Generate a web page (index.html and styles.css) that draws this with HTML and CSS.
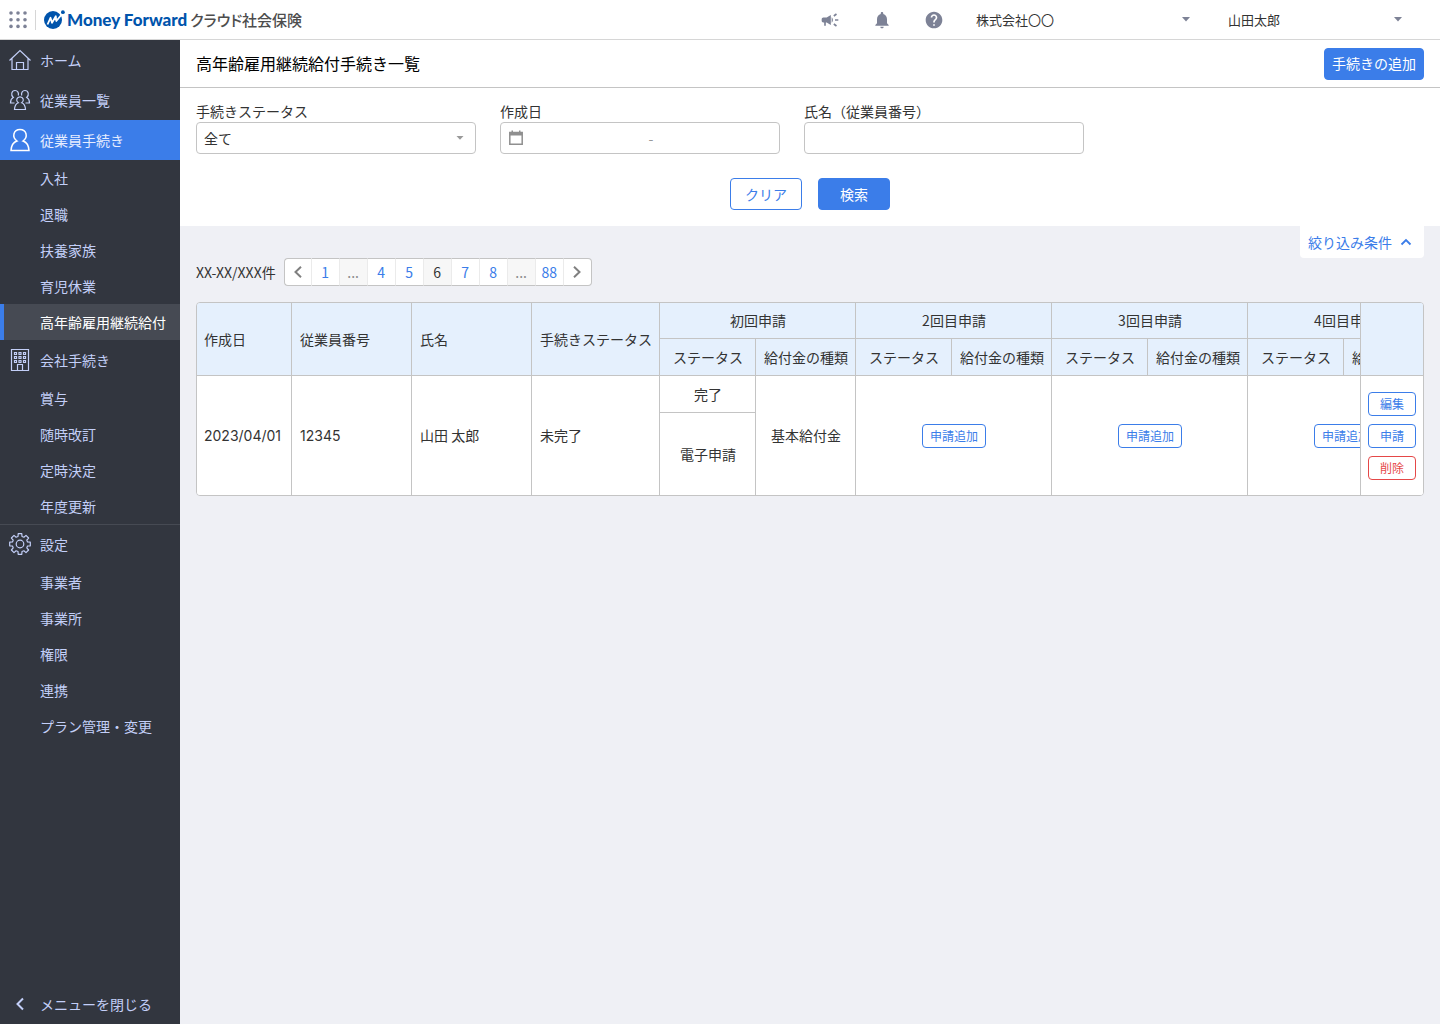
FILE: index.html
```html
<!DOCTYPE html>
<html lang="ja">
<head>
<meta charset="utf-8">
<meta name="viewport" content="width=device-width, initial-scale=1">
<title>高年齢雇用継続給付手続き一覧</title>
<link rel="stylesheet" href="styles.css">
</head>
<body>
<header class="topbar">
  <button class="icon-btn apps" type="button" aria-label="アプリ一覧">
    <svg width="18" height="18" viewBox="0 0 18 18" fill="#7d8296"><circle cx="2" cy="2" r="1.8"/><circle cx="9" cy="2" r="1.8"/><circle cx="16" cy="2" r="1.8"/><circle cx="2" cy="8.7" r="1.8"/><circle cx="9" cy="8.7" r="1.8"/><circle cx="16" cy="8.7" r="1.8"/><circle cx="2" cy="15.4" r="1.8"/><circle cx="9" cy="15.4" r="1.8"/><circle cx="16" cy="15.4" r="1.8"/></svg>
  </button>
  <a class="logo" href="#">
    <svg width="22" height="20" viewBox="0 0 22 20"><circle cx="9" cy="10" r="9" fill="#0054ac"/><path d="M3.500 14.500 6.500 7.800 8 12.800 11.800 6.300 12.300 11 18.500 3.500" fill="none" stroke="#fff" stroke-width="1.800" stroke-linejoin="round"/><circle cx="18.500" cy="2.500" r="3" fill="#fff"/><circle cx="18.900" cy="2.200" r="1.900" fill="#0054ac"/></svg>
    <span class="logo-brand">Money Forward</span>
    <span class="logo-product">クラウド社会保険</span>
  </a>
  <div class="topbar-icons">
    <button class="icon-btn" type="button" aria-label="お知らせ">
      <svg width="20" height="20" viewBox="0 0 24 24" fill="#7d8296"><path d="M18 11v2h4v-2h-4zm-2 6.61c.96.71 2.21 1.65 3.2 2.39.4-.53.8-1.07 1.2-1.6-.99-.74-2.24-1.68-3.2-2.4-.4.54-.8 1.08-1.2 1.61zM20.400 5.600c-.4-.53-.8-1.070-1.200-1.600-.99.740-2.240 1.680-3.200 2.400.4.530.8 1.070 1.200 1.600.96-.72 2.210-1.650 3.200-2.400zM4 9c-1.100 0-2 .9-2 2v2c0 1.100.9 2 2 2h1v4h2v-4h1l5 3V6L8 9H4zm11.500 3c0-1.330-.58-2.530-1.500-3.350v6.690c.92-.81 1.500-2.010 1.500-3.340z"/></svg>
    </button>
    <button class="icon-btn" type="button" aria-label="通知">
      <svg width="20" height="20" viewBox="0 0 24 24" fill="#7d8296"><path d="M12 22c1.100 0 2-.9 2-2h-4c0 1.100.89 2 2 2zm6-6v-5c0-3.070-1.640-5.640-4.500-6.320V4c0-.83-.67-1.500-1.500-1.500s-1.500.67-1.500 1.500v.68C7.630 5.360 6 7.920 6 11v5l-2 2v1h16v-1l-2-2z"/></svg>
    </button>
    <button class="icon-btn" type="button" aria-label="ヘルプ">
      <svg width="20" height="20" viewBox="0 0 24 24" fill="#7d8296"><path d="M12 2C6.480 2 2 6.480 2 12s4.480 10 10 10 10-4.480 10-10S17.520 2 12 2zm1 17h-2v-2h2v2zm2.070-7.750-.9.920C13.450 12.900 13 13.500 13 15h-2v-.5c0-1.100.45-2.100 1.170-2.830l1.240-1.260c.37-.36.59-.86.59-1.410 0-1.100-.9-2-2-2s-2 .9-2 2H8c0-2.210 1.790-4 4-4s4 1.790 4 4c0 .88-.36 1.680-.93 2.250z"/></svg>
    </button>
  </div>
  <div class="dropdown company">
    <select class="plain-select" aria-label="事業者"><option>株式会社〇〇</option></select>
    <svg class="caret" width="8" height="5" viewBox="0 0 8 5"><path d="M0 0h8L4 4.500z" fill="#7d8296"/></svg>
  </div>
  <div class="dropdown user">
    <select class="plain-select" aria-label="ユーザー"><option>山田太郎</option></select>
    <svg class="caret" width="8" height="5" viewBox="0 0 8 5"><path d="M0 0h8L4 4.500z" fill="#7d8296"/></svg>
  </div>
</header>
<div class="layout">
  <nav class="sidebar" aria-label="メインメニュー">
    <a class="nav-main" href="#"><svg width="24" height="24" viewBox="0 0 24 24"><path d="M1.500 12.500 12 2.500l10.500 10M4 10.500v11h16v-11M8.500 21.500v-7h7v7"/></svg>ホーム</a>
    <a class="nav-main" href="#"><svg width="24" height="24" viewBox="0 0 24 24"><path d="M6.500 15H2.500c0-3 .8-4.500 2.800-5.500C2.500 7 3.500 2.500 7 2.500c2.600 0 4.200 2.500 3.200 5M17.500 15h4c0-3-.8-4.500-2.800-5.500C21.500 7 20.500 2.500 17 2.500c-2.600 0-4.200 2.500-3.200 5M10.300 14.800c-3-2.300-1.500-6 1.700-6s4.700 3.700 1.700 6c2.500 1 3.600 3 3.800 6.700h-11c.2-3.700 1.300-5.700 3.800-6.700z"/></svg>従業員一覧</a>
    <a class="nav-main is-open" href="#"><svg width="24" height="24" viewBox="0 0 24 24"><path d="M9 13C3.500 9 5.500 1.500 12 1.500S20.500 9 15 13c4 1.300 5.700 4.500 6 9.500H3c.3-5 2-8.200 6-9.500z"/></svg>従業員手続き</a>
    <ul class="nav-sub">
      <li><a href="#">入社</a></li>
      <li><a href="#">退職</a></li>
      <li><a href="#">扶養家族</a></li>
      <li><a href="#">育児休業</a></li>
      <li><a class="is-current" href="#" aria-current="page">高年齢雇用継続給付</a></li>
    </ul>
    <a class="nav-main" href="#"><svg width="24" height="24" viewBox="0 0 24 24"><path d="M3.500 1.500h17v21h-17zM9.500 22.500v-6h5v6M6.500 4.500h2v2h-2zM11 4.500h2v2h-2zM15.500 4.500h2v2h-2zM6.500 8.500h2v2h-2zM11 8.500h2v2h-2zM15.500 8.500h2v2h-2zM6.500 12.500h2v2h-2zM11 12.500h2v2h-2zM15.500 12.500h2v2h-2z"/></svg>会社手続き</a>
    <ul class="nav-sub">
      <li><a href="#">賞与</a></li>
      <li><a href="#">随時改訂</a></li>
      <li><a href="#">定時決定</a></li>
      <li><a href="#">年度更新</a></li>
    </ul>
    <a class="nav-main has-rule" href="#"><svg width="24" height="24" viewBox="0 0 24 24" stroke-linejoin="round"><circle cx="12" cy="12" r="3.800"/><path d="M10.200 1.700H13.800L14 4.500 15.900 5.200 18 3.400 20.600 6 18.800 8.100 19.500 10 22.300 10.200V13.800L19.500 14 18.800 15.900 20.600 18 18 20.600 15.900 18.800 14 19.500 13.800 22.300H10.200L10 19.500 8.100 18.800 6 20.600 3.400 18 5.200 15.900 4.500 14 1.700 13.800V10.200L4.500 10 5.200 8.100 3.400 6 6 3.400 8.100 5.200 10 4.500Z"/></svg>設定</a>
    <ul class="nav-sub">
      <li><a href="#">事業者</a></li>
      <li><a href="#">事業所</a></li>
      <li><a href="#">権限</a></li>
      <li><a href="#">連携</a></li>
      <li><a href="#">プラン管理・変更</a></li>
    </ul>
    <button class="nav-close" type="button"><svg width="24" height="24" viewBox="0 0 24 24"><path d="M15 6.500 9.500 12l5.500 5.500"/></svg>メニューを閉じる</button>
  </nav>
  <main class="main">
    <div class="title-bar">
      <h1>高年齢雇用継続給付手続き一覧</h1>
      <button class="btn btn-primary" type="button">手続きの追加</button>
    </div>
    <form class="filter">
      <div class="fields">
        <div class="field">
          <label for="status">手続きステータス</label>
          <div class="dropdown control">
            <select id="status" class="plain-select"><option>全て</option></select>
            <svg class="caret" width="8" height="4" viewBox="0 0 8 4"><path d="M.5 0h7L4 3.800z" fill="#999"/></svg>
          </div>
        </div>
        <div class="field">
          <label for="date-from">作成日</label>
          <div class="control date-range">
            <svg width="14" height="16" viewBox="0 0 14 16"><path d="M.8 2.500h12.400v11.700H.8z" fill="none" stroke="#8f8f8f" stroke-width="1.500"/><path d="M.5 2h13v3.500H.5zM2.500.5H4v2H2.500zM10 .5h1.500v2H10z" fill="#8f8f8f"/></svg>
            <input id="date-from" type="text" aria-label="作成日（開始）">
            <span>-</span>
            <input type="text" aria-label="作成日（終了）">
          </div>
        </div>
        <div class="field">
          <label for="name">氏名（従業員番号）</label>
          <input id="name" class="control" type="text">
        </div>
      </div>
      <div class="filter-actions">
        <button class="btn btn-outline btn-fixed" type="reset">クリア</button>
        <button class="btn btn-primary btn-fixed" type="button">検索</button>
      </div>
    </form>
    <section class="content">
      <button class="filter-toggle" type="button">絞り込み条件<svg width="12" height="8" viewBox="0 0 12 8"><path d="m1.500 6.500 4.500-4.500 4.500 4.500" fill="none" stroke="#3b7de9" stroke-width="1.800"/></svg></button>
      <div class="pager-row">
        <span>XX-XX/XXX件</span>
        <ul class="pager">
          <li><a href="#" aria-label="前へ"><svg width="8" height="12" viewBox="0 0 8 12"><path d="M7 .8 1.500 6 7 11.200"/></svg></a></li>
          <li><a href="#">1</a></li>
          <li class="gap">...</li>
          <li><a href="#">4</a></li>
          <li><a href="#">5</a></li>
          <li class="current" aria-current="page">6</li>
          <li><a href="#">7</a></li>
          <li><a href="#">8</a></li>
          <li class="gap">...</li>
          <li><a href="#">88</a></li>
          <li><a href="#" aria-label="次へ"><svg width="8" height="12" viewBox="0 0 8 12"><path d="M1 .8 6.500 6 1 11.200"/></svg></a></li>
        </ul>
      </div>
      <div class="table-wrap">
        <table class="list">
          <colgroup><col class="c-date"><col class="c-mid"><col class="c-mid"><col class="c-proc"><col class="c-status"><col class="c-kind"><col class="c-status"><col class="c-kind"><col class="c-status"><col class="c-kind"><col class="c-status"><col class="c-kind"><col class="c-ops"></colgroup>
          <thead>
            <tr class="r-group">
              <th class="left" rowspan="2">作成日</th>
              <th class="left" rowspan="2">従業員番号</th>
              <th class="left" rowspan="2">氏名</th>
              <th class="left" rowspan="2">手続きステータス</th>
              <th colspan="2">初回申請</th>
              <th colspan="2">2回目申請</th>
              <th colspan="2">3回目申請</th>
              <th colspan="2">4回目申請</th>
              <th class="ops" rowspan="2" aria-label="操作"></th>
            </tr>
            <tr class="r-sub">
              <th>ステータス</th><th>給付金の種類</th>
              <th>ステータス</th><th>給付金の種類</th>
              <th>ステータス</th><th>給付金の種類</th>
              <th>ステータス</th><th>給付金の種類</th>
            </tr>
          </thead>
          <tbody>
            <tr class="r-sub">
              <td class="left num last" rowspan="2">2023/04/01</td>
              <td class="left num last" rowspan="2">12345</td>
              <td class="left last" rowspan="2">山田 太郎</td>
              <td class="left last" rowspan="2">未完了</td>
              <td>完了</td>
              <td class="last" rowspan="2">基本給付金</td>
              <td class="last" rowspan="2" colspan="2"><button class="btn-small" type="button">申請追加</button></td>
              <td class="last" rowspan="2" colspan="2"><button class="btn-small" type="button">申請追加</button></td>
              <td class="last" rowspan="2" colspan="2"><button class="btn-small" type="button">申請追加</button></td>
              <td class="ops last" rowspan="2">
                <div class="ops-list">
                  <button class="btn-small" type="button">編集</button>
                  <button class="btn-small" type="button">申請</button>
                  <button class="btn-small danger" type="button">削除</button>
                </div>
              </td>
            </tr>
            <tr class="r-detail"><td class="last">電子申請</td></tr>
          </tbody>
        </table>
      </div>
    </section>
  </main>
</div>
</body>
</html>
```
FILE: styles.css
```css
:root {
  --blue: #3b7de9;
  --line: #c4c4c4;
  --text: #333;
  --nav: #32363f;
  --nav-text: #c3cff8;
  --icon: #7d8296;
}

* { box-sizing: border-box; }

body {
  margin: 0;
  min-height: 100vh;
  display: flex;
  flex-direction: column;
  font-family: "Noto Sans CJK JP", sans-serif;
  font-size: 14px;
  line-height: 19px;
  color: var(--text);
  background: #eff0f5;
}

button, input, select { font: inherit; color: inherit; }
button { cursor: pointer; }
a { color: inherit; text-decoration: none; }
ul { list-style: none; margin: 0; padding: 0; }
svg { display: block; flex: none; }

/* Top bar */
.topbar {
  height: 40px;
  display: flex;
  align-items: center;
  background: #fff;
  border-bottom: 1px solid #d6d6d6;
}
.icon-btn { padding: 0; border: 0; background: none; }
.apps {
  height: 20px;
  padding: 0 8px 0 9px;
  border-right: 1px solid #d6d6d6;
}
.logo {
  display: flex;
  align-items: center;
  margin-left: 8px;
  white-space: nowrap;
}
.logo-brand {
  margin-left: 1px;
  font-family: Lato, sans-serif;
  font-weight: 900;
  font-size: 17px;
  color: #0054ac;
}
.logo-product {
  margin-left: 3px;
  font-size: 15px;
  font-weight: 500;
  font-feature-settings: "palt";
  color: #4d4d4d;
}
.topbar-icons {
  display: flex;
  gap: 32px;
  margin-left: auto;
}
.dropdown { display: grid; align-items: center; }
.dropdown > * { grid-area: 1 / 1; }
.caret { justify-self: end; pointer-events: none; }
.plain-select {
  appearance: none;
  width: 100%;
  height: 100%;
  padding: 0;
  border: 0;
  background: none;
}
.company, .user { font-size: 13px; }
.company { width: 214px; margin-left: 32px; }
.user { width: 174px; margin: 0 38px; }

/* Sidebar */
.layout { flex: 1; display: flex; }
.sidebar {
  width: 180px;
  flex: none;
  display: flex;
  flex-direction: column;
  background: var(--nav);
  color: var(--nav-text);
}
.sidebar svg {
  fill: none;
  stroke: var(--nav-text);
  stroke-width: 1.2;
}
.nav-main, .nav-close {
  display: flex;
  align-items: center;
  gap: 8px;
  height: 40px;
  padding: 0 8px;
}
.nav-main.is-open { background: var(--blue); color: #e6edff; }
.nav-main.is-open svg { stroke: #fff; stroke-width: 1.5; }
.nav-main.has-rule { box-shadow: inset 0 1px #464a53; }
.nav-sub a {
  display: flex;
  align-items: center;
  height: 36px;
  padding-left: 40px;
  white-space: nowrap;
}
.nav-sub .is-current {
  color: #fff;
  background: #464a53;
  box-shadow: inset 4px 0 var(--blue);
}
.nav-close {
  margin-top: auto;
  border: 0;
  background: none;
}
.nav-close svg { stroke-width: 2; }

/* Page title */
.main { flex: 1; min-width: 0; }
.title-bar {
  height: 48px;
  display: flex;
  align-items: center;
  justify-content: space-between;
  padding: 0 16px;
  background: #fff;
  border-bottom: 1px solid var(--line);
}
h1 {
  margin: 0;
  font-size: 16px;
  font-weight: 400;
  line-height: 23px;
  color: #000;
}
.btn {
  height: 32px;
  padding: 0 7px;
  border: 1px solid var(--blue);
  border-radius: 4px;
}
.btn-primary { background: var(--blue); color: #fff; }
.btn-outline { background: #fff; color: var(--blue); }
.btn-fixed { width: 72px; }

/* Filter */
.filter { padding: 14px 16px 16px; background: #fff; }
.fields { display: flex; flex-wrap: wrap; gap: 24px; }
.field { width: 280px; }
.field label { display: block; margin-bottom: 1px; }
.control {
  width: 100%;
  height: 32px;
  padding: 0 7px;
  border: 1px solid var(--line);
  border-radius: 4px;
  background: #fff;
}
.control .caret { margin-right: 4px; }
.date-range {
  display: flex;
  align-items: center;
  padding: 0 0 0 8px;
  color: #999;
}
.date-range input {
  flex: 1;
  min-width: 0;
  border: 0;
  background: none;
}
.filter-actions {
  display: flex;
  justify-content: center;
  gap: 16px;
  margin-top: 24px;
}

/* List */
.content { padding: 0 16px 16px; }
.filter-toggle {
  display: flex;
  align-items: center;
  gap: 8px;
  height: 32px;
  margin-left: auto;
  padding: 0 12px 0 8px;
  border: 0;
  border-radius: 0 0 4px 4px;
  background: #fff;
  color: var(--blue);
}
.pager-row {
  display: flex;
  align-items: center;
  gap: 8px;
  margin-bottom: 16px;
}
.pager {
  display: flex;
  color: var(--blue);
}
.pager li {
  width: 28px;
  height: 28px;
  display: grid;
  background: #fff;
  border: 1px solid var(--line);
  border-width: 1px 1px 1px 0;
  border-right-color: #ebebeb;
  place-items: center;
}
.pager li:first-child { border-left-width: 1px; border-radius: 4px 0 0 4px; }
.pager li:last-child { border-right-color: var(--line); border-radius: 0 4px 4px 0; }
.pager .gap { background: #f7f7f7; color: #8c8c8c; }
.pager .current { background: #f7f7f7; color: var(--text); }
.pager svg { fill: none; stroke: #808080; stroke-width: 2; }

.table-wrap {
  overflow-x: auto;
  scrollbar-width: none;
  border: 1px solid var(--line);
  border-radius: 4px;
  background: #fff;
}
.list {
  width: 1310px;
  min-width: 100%;
  table-layout: fixed;
  border-collapse: separate;
  border-spacing: 0;
}
.c-date { width: 95px; }
.c-mid { width: 120px; }
.c-proc { width: 128px; }
.c-status { width: 96px; }
.c-kind { width: 100px; }
.c-ops { width: 63px; }
.list th, .list td {
  padding: 0 0 0 1px;
  border: 1px solid var(--line);
  border-width: 0 1px 1px 0;
  font-weight: 400;
  text-align: center;
  white-space: nowrap;
}
.list th { background: #e5f0fd; }
.list .left { padding-left: 8px; text-align: left; }
.list .left:first-child { padding-left: 7px; }
.list .last { border-bottom-width: 0; }
.list .num { font-family: Inter, sans-serif; }
.list .ops {
  position: sticky;
  right: 0;
  padding: 0;
  border-left-width: 1px;
  border-right-width: 0;
}
.list td.ops { background: #fff; }
.r-group { height: 36px; }
.r-sub { height: 37px; }
.r-detail { height: 82px; }
.ops-list { display: grid; gap: 8px; padding: 0 7px; }
.btn-small {
  height: 24px;
  padding: 0 7px;
  border: 1px solid var(--blue);
  border-radius: 4px;
  background: #fff;
  color: var(--blue);
  font-size: 12px;
  line-height: 19px;
  vertical-align: middle;
}
.btn-small.danger { border-color: #e54848; color: #e54848; }
```
